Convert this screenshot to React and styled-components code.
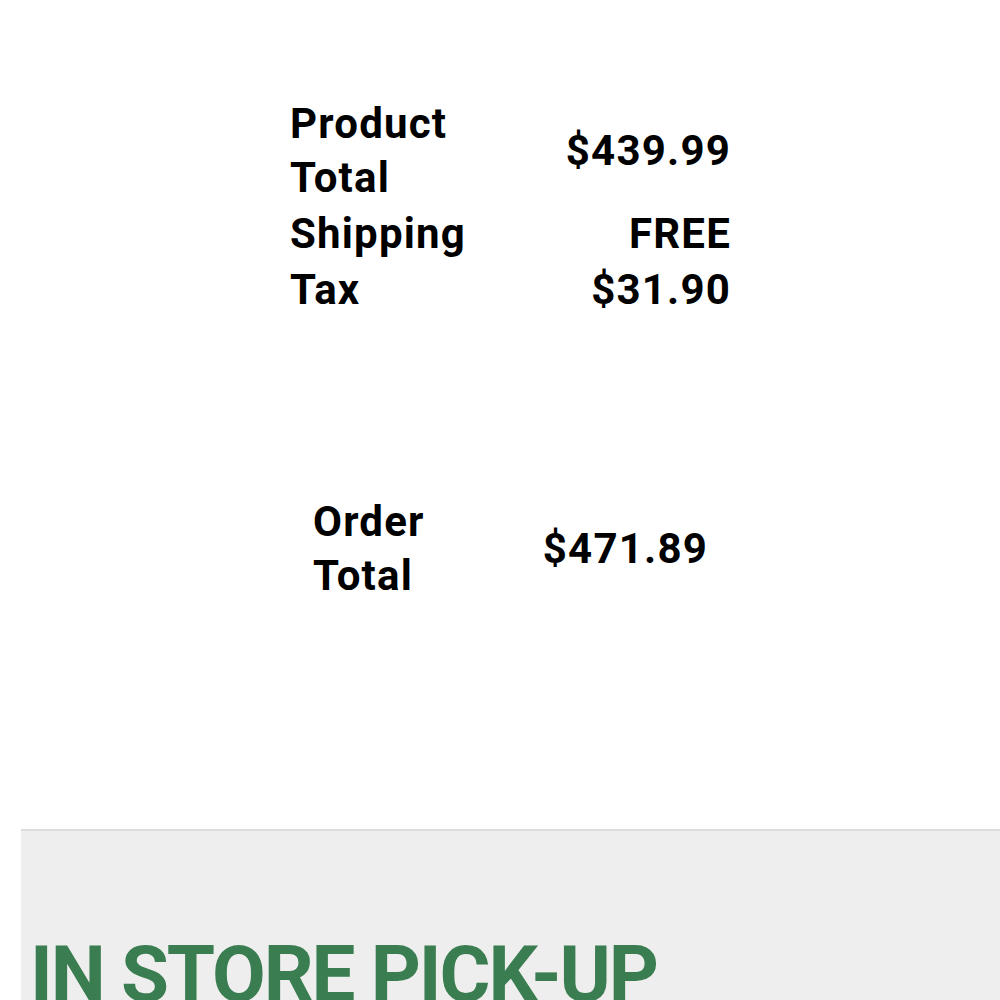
import React from "react";
import styled, { createGlobalStyle } from "styled-components";

const GlobalStyle = createGlobalStyle`
    html, body {
        margin: 0;
        padding: 0;
        background: #fff;
        font-family: Roboto, "Noto Sans", sans-serif;
    }
`;

const Page = styled.div`
    padding: 96px 0 0 21px;
`;

const Summary = styled.table`
    border-collapse: collapse;
    margin: 0 auto;
    width: ${(p) => p.width}px;
    font-size: 42px;
    font-weight: 700;
    line-height: 54px;
    letter-spacing: 1.2px;
    color: #000;

    td {
        padding: 1px 0;
        vertical-align: middle;
    }
    td:first-child {
        width: ${(p) => p.labelWidth}px;
    }
    td:last-child {
        text-align: right;
    }
`;

const Spacer = styled.div`
    height: ${(p) => p.h}px;
`;

const Pickup = styled.section`
    border-top: 2px solid #dcdcdc;
    background: #eeeeee;
    padding: 105px 0 0 9px;
    height: 200px;
`;

const PickupTitle = styled.h2`
    margin: 0;
    color: #3a7d50;
    font-size: 78px;
    font-weight: 700;
    line-height: 1;
    letter-spacing: -2.1px;
    white-space: nowrap;
`;

const App = () => {
    return (
        <>
            <GlobalStyle />
            <Page>
                <Summary width={441} labelWidth={190}>
                    <tbody>
                        <tr>
                            <td>Product Total</td>
                            <td>$439.99</td>
                        </tr>
                        <tr>
                            <td>Shipping</td>
                            <td>FREE</td>
                        </tr>
                        <tr>
                            <td>Tax</td>
                            <td>$31.90</td>
                        </tr>
                    </tbody>
                </Summary>
                <Spacer h={176} />
                <Summary width={395} labelWidth={170}>
                    <tbody>
                        <tr>
                            <td>Order Total</td>
                            <td>$471.89</td>
                        </tr>
                    </tbody>
                </Summary>
                <Spacer h={225} />
                <Pickup>
                    <PickupTitle>IN STORE PICK-UP</PickupTitle>
                </Pickup>
            </Page>
        </>
    );
};

export default App;
